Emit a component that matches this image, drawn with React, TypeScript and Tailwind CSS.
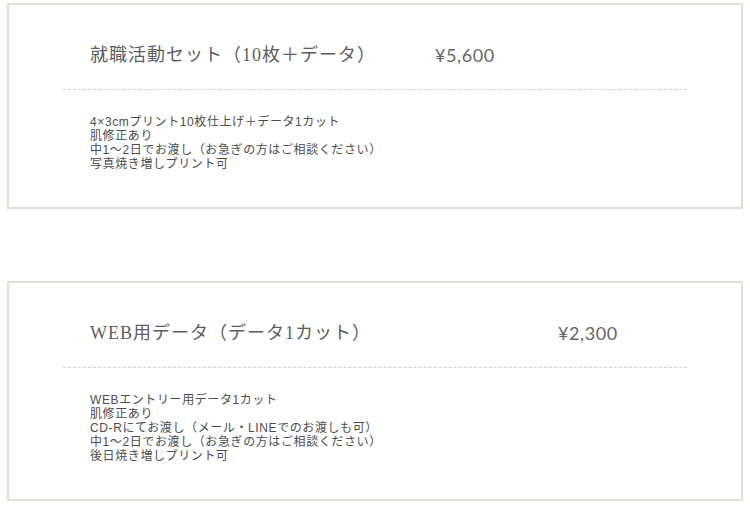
const plans = [
  {
    title: "就職活動セット（10枚＋データ）",
    titleWidth: "w-[345px]",
    price: "¥5,600",
    lines: [
      "4×3cmプリント10枚仕上げ＋データ1カット",
      "肌修正あり",
      "中1〜2日でお渡し（お急ぎの方はご相談ください）",
      "写真焼き増しプリント可",
    ],
  },
  {
    title: "WEB用データ（データ1カット）",
    titleWidth: "w-[468px]",
    price: "¥2,300",
    lines: [
      "WEBエントリー用データ1カット",
      "肌修正あり",
      "CD-Rにてお渡し（メール・LINEでのお渡しも可）",
      "中1〜2日でお渡し（お急ぎの方はご相談ください）",
      "後日焼き増しプリント可",
    ],
  },
];

function PlanCard({ plan }: { plan: (typeof plans)[number] }) {
  return (
    <div className="border-2 border-[#e3ded1] bg-white px-[54px] pt-[36px] pb-[36px]">
      <div className="flex items-center h-[28px] pl-[27px]">
        <span
          className={
            plan.titleWidth +
            " shrink-0 text-[18px] leading-[28px] tracking-[1px] text-[#5e5e5e] [font-family:'Liberation_Serif','Noto_Sans_CJK_JP',serif]"
          }
        >
          {plan.title}
        </span>
        <span className="text-[18px] leading-[28px] tracking-[0.6px] text-[#666666] [font-family:Lato,'Liberation_Sans',sans-serif]">
          {plan.price}
        </span>
      </div>
      <div className="mt-[20px] border-t border-dashed border-[#cfcfcf]" />
      <div className="mt-[25px] pl-[27px] text-[12px] leading-[14px] tracking-[0.6px] text-[#4d4d4d] [font-family:'Liberation_Sans','Noto_Sans_CJK_JP',sans-serif]">
        {plan.lines.map((line) => (
          <p key={line}>{line}</p>
        ))}
      </div>
    </div>
  );
}

export default function App() {
  return (
    <div className="w-[750px] h-[509px] bg-white px-[7px] pt-[3px] overflow-hidden">
      <div className="flex flex-col gap-[72px]">
        {plans.map((plan) => (
          <PlanCard key={plan.title} plan={plan} />
        ))}
      </div>
    </div>
  );
}
